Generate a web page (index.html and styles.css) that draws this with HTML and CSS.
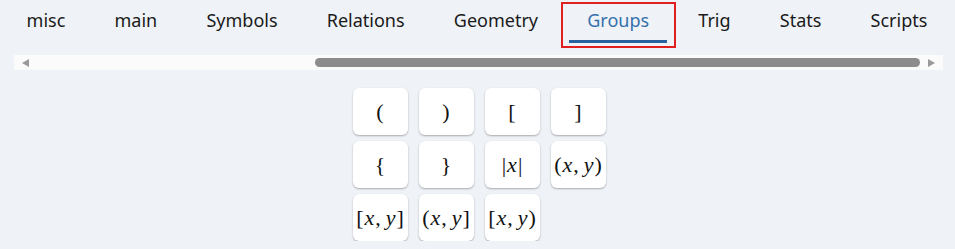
FILE: index.html
```html
<!DOCTYPE html>
<html lang="en">
<head>
    <meta charset="UTF-8">
    <meta name="viewport" content="width=device-width, initial-scale=1.0">
    <title>Math Keyboard - Groups</title>
    <link rel="stylesheet" href="styles.css">
</head>
<body>
    <nav class="tabs">
        <div class="tab">misc</div>
        <div class="tab">main</div>
        <div class="tab">Symbols</div>
        <div class="tab">Relations</div>
        <div class="tab">Geometry</div>
        <div class="tab active">Groups</div>
        <div class="tab">Trig</div>
        <div class="tab">Stats</div>
        <div class="tab">Scripts</div>
    </nav>

    <div class="scrollbar">
        <svg class="arrow arrow-left" width="7" height="8" viewBox="0 0 7 8"><path d="M0 4 L7 0 L7 8 Z"/></svg>
        <div class="thumb"></div>
        <svg class="arrow arrow-right" width="7" height="8" viewBox="0 0 7 8"><path d="M7 4 L0 0 L0 8 Z"/></svg>
    </div>

    <div class="keys">
        <button class="key">(</button>
        <button class="key">)</button>
        <button class="key">[</button>
        <button class="key">]</button>
        <button class="key">{</button>
        <button class="key">}</button>
        <button class="key">|<i>x</i>|</button>
        <button class="key">(<i>x</i>,<span class="thin"></span><i>y</i>)</button>
        <button class="key">[<i>x</i>,<span class="thin"></span><i>y</i>]</button>
        <button class="key">(<i>x</i>,<span class="thin"></span><i>y</i>]</button>
        <button class="key">[<i>x</i>,<span class="thin"></span><i>y</i>)</button>
    </div>
</body>
</html>
```

FILE: styles.css
```css
:root {
    --page-bg: #eff2f7;
    --text-color: #1a1a1a;
    --active-color: #3570ab;
    --underline-color: #2763a0;
    --focus-color: #e0201f;
    --track-bg: #fbfbfb;
    --thumb-color: #8c8c8c;
    --arrow-color: #9a9a9a;
}

body {
    margin: 0;
    background-color: var(--page-bg);
    font-family: "Noto Sans", "Open Sans", sans-serif;
    color: var(--text-color);
    -webkit-font-smoothing: antialiased;
}

.tabs {
    display: flex;
    padding: 4px 0 0 2px;
    height: 46px;
    box-sizing: border-box;
}

.tab {
    display: flex;
    flex-direction: column;
    padding: 4px 24.6px 0;
    height: 42px;
    box-sizing: border-box;
    font-size: 18px;
    line-height: 24px;
    white-space: nowrap;
}

.tab.active {
    color: var(--active-color);
    outline: 2px solid var(--focus-color);
}

.tab.active::after {
    content: "";
    display: block;
    height: 3px;
    margin: auto -18px 3px;
    background-color: var(--underline-color);
}

.scrollbar {
    display: flex;
    align-items: center;
    margin: 9px 12px 0 14px;
    height: 15px;
    background-color: var(--track-bg);
}

.arrow {
    fill: var(--arrow-color);
    flex: none;
}

.arrow-left {
    margin-left: 8px;
}

.arrow-right {
    margin-left: 8px;
}

.thumb {
    flex: none;
    width: 605px;
    height: 9px;
    margin-left: 286px;
    border-radius: 5px;
    background-color: var(--thumb-color);
}

.keys {
    display: grid;
    grid-template-columns: repeat(4, 55px);
    grid-auto-rows: 47px;
    column-gap: 11px;
    row-gap: 6px;
    justify-content: center;
    padding-left: 3px;
    margin-top: 18px;
}

.key {
    border: none;
    padding: 0;
    border-radius: 6px;
    background-color: #ffffff;
    box-shadow: 0 1px 2px rgba(0, 0, 0, 0.3);
    font-family: "Liberation Serif", "DejaVu Serif", serif;
    font-size: 22px;
    color: #111111;
    white-space: nowrap;
}

.key i {
    margin: 0 1px;
}

.thin {
    display: inline-block;
    width: 4px;
}
```
